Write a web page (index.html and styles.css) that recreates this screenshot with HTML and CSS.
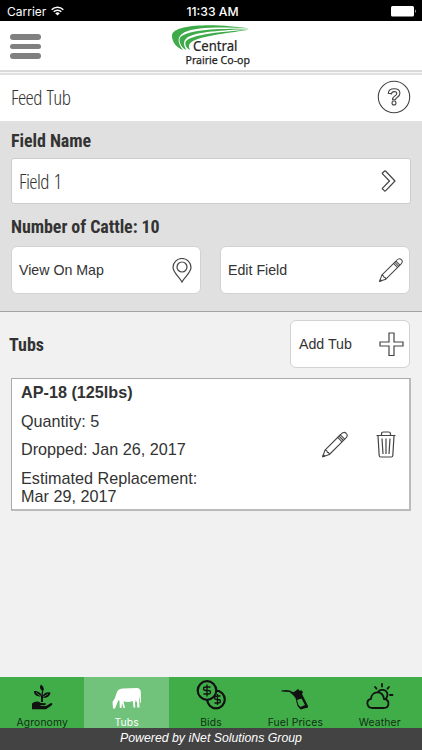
FILE: index.html
```html
<!DOCTYPE html>
<html lang="en">
<head>
<meta charset="utf-8">
<meta name="viewport" content="width=device-width, initial-scale=1">
<title>Feed Tub</title>
<link rel="stylesheet" href="styles.css">
</head>
<body>
<div class="app">
  <div class="status">
    <div class="carrier"><span>Carrier</span>
      <svg width="13" height="10" viewBox="0 0 13 10"><path d="M.7 3.7a8.2 8.2 0 0 1 11.6 0M2.7 5.8a5.4 5.4 0 0 1 7.6 0" fill="none" stroke="#fff" stroke-width="1.6"/><path d="M4.2 7.3a3.3 3.3 0 0 1 4.6 0L6.5 9.6z" fill="#fff"/></svg>
    </div>
    <div class="clock">11:33 AM</div>
    <svg class="battery" width="26" height="11" viewBox="0 0 26 11"><rect width="23" height="10.6" rx="1.5" fill="#fff"/><path d="M24 3.3q1.7 2 0 4z" fill="#fff"/></svg>
  </div>

  <header class="header">
    <div class="menu"><i></i><i></i><i></i></div>
    <svg class="logo" width="84" height="46" viewBox="169 23 84 46">
      <g fill="#3faa49">
        <path d="M249 28.500C220 23.500 174 23 172 35C171.500 42 177 48 183 50C178.500 44 175.500 37.500 184 32.500C196 26.500 225 27 249 28.500Z"/>
        <path d="M249 29C220 28 180 30 179.500 39.500C179.500 44 182 48 186.500 50C183.500 45 182.500 41 188 37C199 31 230 30 249 29Z"/>
        <path d="M249 29.500C228 31.500 188 34 185.300 42.500C185 46 187 48.500 190 50C188.200 46 188.500 43.500 193 41C204 35 232 33 249 29.500Z"/>
      </g>
      <text class="logo-big" x="193" y="51" textLength="44.500" lengthAdjust="spacingAndGlyphs">Central</text>
      <text class="logo-small" x="185.500" y="63.500" textLength="64.500" lengthAdjust="spacingAndGlyphs">Prairie Co-op</text>
    </svg>
  </header>

  <div class="titlebar">
    <h1 class="light">Feed Tub</h1>
    <svg width="34" height="34" viewBox="0 0 34 34" fill="none" stroke="#444" stroke-width="1.100"><circle cx="17" cy="17" r="15.700"/><path d="M11.300 13.300C11.500 10.500 14 8.800 17.200 8.800C20.600 8.800 22.900 10.600 22.900 13.300C22.900 17.300 18.500 17 18.500 19.800H15.500C15.300 16 19.800 16 19.800 13.500C19.800 10.900 14.700 10.900 14.500 13.900Z"/><circle cx="17" cy="23" r="2"/></svg>
  </div>

  <section class="field">
    <h2 class="bold">Field Name</h2>
    <div class="select"><span class="light">Field 1</span>
      <svg width="15" height="22" viewBox="0 0 15 22" fill="none" stroke="#444" stroke-width="1.200" stroke-linejoin="round"><path d="M1.300 3.200L3.600 1Q4 .7 4.500 1L14 11L4.500 20.800Q4 21.200 3.600 20.900L1.300 18.800V18.300L8.500 11L1.300 3.700Z"/></svg>
    </div>
    <h2 class="bold cattle">Number of Cattle: 10</h2>
    <div class="buttons">
      <div class="button"><span>View On Map</span>
        <svg width="20" height="25" viewBox="0 0 20 25" fill="none" stroke="#444" stroke-width="1.200"><path d="M10 24C7.500 19 1 14.500 1 9.500A9 9 0 0 1 19 9.500C19 14.500 12.500 19 10 24Z"/><circle cx="10" cy="9" r="5"/></svg>
      </div>
      <div class="button"><span>Edit Field</span>
        <svg width="24" height="24" viewBox="0 0 26 26"><use href="#pencil"/></svg>
      </div>
    </div>
  </section>

  <section class="tubs">
    <div class="tubs-head">
      <h2 class="bold">Tubs</h2>
      <div class="button add"><span>Add Tub</span>
        <svg width="25" height="25" viewBox="0 0 25 25" fill="none" stroke="#444" stroke-width="1.200"><path d="M10 1H15V10H24V14H15V23.500H10V14H1V10H10Z"/></svg>
      </div>
    </div>
    <div class="card">
      <div class="info">
        <b>AP-18 (125lbs)</b>
        <p>Quantity: 5</p>
        <p>Dropped: Jan 26, 2017</p>
        <p>Estimated Replacement:<br>Mar 29, 2017</p>
      </div>
      <svg class="edit" width="26" height="27" viewBox="0 0 26 26"><g id="pencil" fill="none" stroke="#444" stroke-width="1.100" stroke-linejoin="round"><path d="M.7 25.300L3 18.600L18.600 3C20.500 .9 22.500 0 24.200 1.800C26 3.500 25.300 5.500 23 7.400L7.400 23Z"/><path d="M3 18.600L5 19.400L5.300 20.800L6.700 21.100L7.400 23M15.700 5.900L20.100 10.300M17 4.600L21.400 9M18.300 3.300L22.700 7.700"/><path d="M.7 25.300L1.400 23.300L2.700 24.600Z" fill="#444"/></g></svg>
      <svg class="trash" width="20" height="27" viewBox="0 0 20 27" fill="none" stroke="#444" stroke-width="1.200"><path d="M.5 4.500H19.500M2 5L3.200 24.500Q3.300 26 4.800 26H15.200Q16.700 26 16.800 24.500L18 5M5.500 4.500V3Q5.500 1 7.500 1H12.500Q14.500 1 14.500 3V4.500M6 7.500L7 23M10 7.500V23M14 7.500L13 23"/></svg>
    </div>
  </section>

  <nav class="tabs">
    <div class="tab"><svg viewBox="0 0 32 28"><path d="M6 20.500Q10 17 15 20L19.500 20.300Q21 21.500 18.500 22.300H14.500V23H20L25 20Q27.500 20 25.500 22.500L20 26.300H6ZM15 19V13.500C9.500 13.500 8 11 8 8C12 8 15 9.500 15.300 12.500L16 7.700C13.500 6 13.500 3.500 15 1.500C18 4 18.500 6 17.200 8L16.700 13Q18.500 8.500 24.500 9.500C24 13.500 21 15.200 17 14.800V19Z"/><path d="M10 9.500L15 13.500M17 14L22 11" stroke="#41ad49" stroke-width=".7"/></svg><span>Agronomy</span></div>
    <div class="tab active"><svg viewBox="0 0 32 28"><path d="M1.500 19L4 15Q5 11 6.500 8Q8 5.500 12 5.500L26 5Q29.500 5.300 29.800 9L30 19L29.200 20.500L28.800 13L28.200 17.500L28.500 24.500H26.300L26.200 20L24.700 17L24 20.500L24.300 24.500H22.500L21.800 18Q17 20 12.500 18.300L14 25H12.500L11 20L10.500 25H8.800L8.500 18L7.500 17L6 20.500L4 25.500H2Z"/></svg><span>Tubs</span></div>
    <div class="tab"><svg class="coins" viewBox="0 0 32 32" fill="none" stroke="#111" stroke-width="2.200"><circle cx="21" cy="20.500" r="8.800"/><circle cx="12" cy="11.500" r="9.300" fill="#41ad49"/><path d="M15.500 8H11Q8.500 8 8.500 9.700T11 11.500H13Q15.500 11.500 15.500 13.300T13 15H8.500M12 5.500V17.500M25.500 17H22Q19.500 17 19.500 18.700T22 20.500H23Q25.500 20.500 25.500 22.300T23 24H19.500M22.500 15V26" stroke-width="1.300"/></svg><span>Bids</span></div>
    <div class="tab"><svg viewBox="0 0 32 28"><path d="M2.500 7.500Q7 6.500 11 7.500Q13 9 15 9L19 6L21 8L22 7L24 9L23 11L25 15L29 23V24.500L21.500 26.500L18.500 23L16.500 15L14 12L10.500 9L2.500 8.500Z"/><path d="M18 17L22.500 15.500L26 22L21.500 24L19.500 22Z" fill="#41ad49"/></svg><span>Fuel Prices</span></div>
    <div class="tab"><svg viewBox="0 0 32 28" fill="none" stroke="#111" stroke-width="1.800" stroke-linecap="round"><path d="M8.500 25H19.500C26 25 26 16.500 20 16C18.500 6.800 7.500 7.800 7 15.800C1.500 17 2.500 25 8.500 25ZM14 9.500C15.500 5.500 22.500 6 23.500 11Q23.500 14 22 15.700M18 1V3.500M25 4L23.500 5.700M26 12H28.500M11 4L12.500 5.700"/></svg><span>Weather</span></div>
  </nav>
  <footer>Powered by iNet Solutions Group</footer>
</div>
</body>
</html>
```
FILE: styles.css
```css
* { box-sizing: border-box; }
body { margin: 0; font-family: "Liberation Sans", Arial, sans-serif; color: #333; }
.app { width: 422px; height: 750px; display: flex; flex-direction: column; background: #f1f1f1; overflow: hidden; }
svg { display: block; flex: none; }
h1, h2, p { margin: 0; font-weight: normal; }

.status { height: 21px; background: #000; color: #fff; display: grid; grid-template-columns: 1fr auto 1fr; align-items: center; padding: 1px 6px 0 7px; font: 12px Inter, sans-serif; }
.carrier { display: flex; align-items: center; gap: 5px; }
.clock { font-weight: 500; font-size: 12.200px; padding-left: 2px; }
.battery { justify-self: end; margin-right: -1px; }

.header { height: 54px; background: #fff; display: grid; grid-template-columns: 1fr 84px 1fr; padding: 2px 10px 0; position: relative; box-shadow: inset 0 -2px #e0e0e0, inset 0 -3px #f7f7f7, inset 0 -5px #dadada; }
.menu { display: flex; flex-direction: column; gap: 4px; padding-top: 11px; }
.menu i { width: 31px; height: 5.500px; border-radius: 3px; background: #808080; }
.logo { overflow: visible; }
.logo-big { font: 14px "Noto Sans", sans-serif; fill: #222; stroke: #222; stroke-width: .2; }
.logo-small { font: 11.500px "Noto Sans", sans-serif; fill: #222; stroke: #222; stroke-width: .25; }

.titlebar { height: 46px; background: #fff; display: flex; justify-content: space-between; align-items: center; padding: 0 11px 2px; }
.light { font-family: "Open Sans", sans-serif; font-weight: 300; font-stretch: 75%; font-size: 21px; line-height: 28px; letter-spacing: -.65px; word-spacing: 1.500px; }
.bold { font-family: Roboto, sans-serif; font-weight: 700; font-stretch: 75%; font-size: 18px; line-height: 22px; letter-spacing: -.07px; }

.field { height: 191px; background: #e0e0e0; border-bottom: 1px solid #a3a3a3; padding: 9px 11px 0; }
.select { height: 46px; margin-top: 6px; background: #fff; border: 1px solid #ccc; border-radius: 3px; display: flex; align-items: center; justify-content: space-between; padding: 0 14px 0 7px; }
.cattle { margin-top: 12px; }
.buttons { display: flex; justify-content: space-between; margin-top: 8px; padding-right: 1px; }
.button { width: 190px; height: 48px; background: #fff; border: 1px solid #d2d2d2; border-radius: 6px; display: flex; align-items: center; justify-content: space-between; padding: 0 8px 0 7px; font-size: 14.200px; }
.button + .button { padding-right: 6px; }

.tubs { flex: 1; padding: 8px 11px 0; }
.tubs-head { display: flex; justify-content: space-between; align-items: center; padding: 0 1px 0 0; margin-left: -2px; }
.tubs-head .bold { padding-top: 2px; }
.add { width: 120px; padding: 0 5px 0 8px; }
.card { margin-top: 10px; height: 133px; border: 1px solid #aaa; border-right: 2px solid #bbb; border-bottom: 2px solid #bbb; background: #fff; display: flex; align-items: center; padding-right: 13px; }
.info { flex: 1; align-self: stretch; padding: 4px 0 0 9px; font-size: 16.200px; line-height: 18px; }
.info p { margin-top: 10.500px; }
.info b { display: block; }
.trash { margin-left: 28px; }

.tabs { height: 51px; flex: none; display: grid; grid-template-columns: repeat(5, 1fr); background: #41ad49; }
.tab { display: flex; flex-direction: column; align-items: center; color: #102d13; font: 10.300px/12px Inter, sans-serif; letter-spacing: .15px; }
.tab svg { width: 32px; height: 28px; margin: 6px 0 5px; fill: #111; }
.tab svg.coins { height: 32px; margin: 2px 0 5px; fill: none; }
.tab:last-child svg { fill: none; }
.tab.active { background: #71c27b; color: #fff; }
.tab.active svg { fill: #fff; }
footer { height: 22px; flex: none; background: #434343; color: #fff; text-align: center; font-size: 12.300px; line-height: 21px; font-style: italic; }
```
